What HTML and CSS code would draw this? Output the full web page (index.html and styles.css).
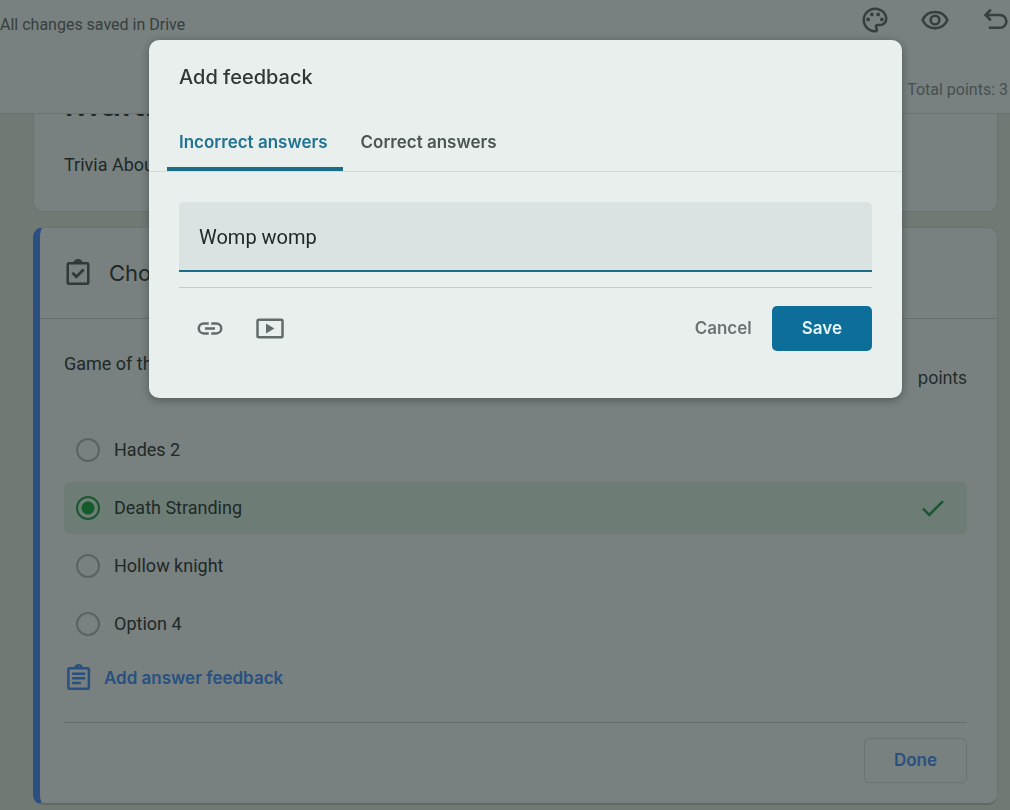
FILE: index.html
```html
<!DOCTYPE html>
<html lang="en">
<head>
  <meta charset="UTF-8">
  <meta name="viewport" content="width=device-width, initial-scale=1.0">
  <title>Add feedback</title>
  <link rel="stylesheet" href="styles.css">
</head>
<body>
  <header class="topbar">
    <div class="topbar-row">
      <p class="save-status">All changes saved in Drive</p>
      <div class="tools">
        <button type="button" class="icon-btn" aria-label="Customize theme">
          <svg width="30" height="30" viewBox="0 0 24 24" fill="currentColor"><path d="M12 22C6.490 22 2 17.510 2 12S6.490 2 12 2s10 4.040 10 9c0 3.310-2.690 6-6 6h-1.770c-.28 0-.5.22-.5.5 0 .12.05.23.13.33.41.47.64 1.060.64 1.670A2.500 2.500 0 0 1 12 22zm0-18c-4.410 0-8 3.590-8 8s3.590 8 8 8c.28 0 .5-.22.5-.5a.54.54 0 0 0-.14-.35c-.41-.46-.63-1.050-.63-1.650a2.500 2.500 0 0 1 2.500-2.500H16c2.210 0 4-1.790 4-4 0-3.860-3.590-7-8-7z"/><circle cx="6.500" cy="11.500" r="1.500"/><circle cx="9.500" cy="7.500" r="1.500"/><circle cx="14.500" cy="7.500" r="1.500"/><circle cx="17.500" cy="11.500" r="1.500"/></svg>
        </button>
        <button type="button" class="icon-btn" aria-label="Preview">
          <svg width="30" height="30" viewBox="0 0 24 24" fill="none" stroke="currentColor" stroke-width="2"><path d="M2.100 12C3.700 8.200 7.500 5.500 12 5.500s8.300 2.700 9.900 6.500c-1.600 3.800-5.400 6.500-9.900 6.500S3.700 15.800 2.100 12z"/><circle cx="12" cy="12" r="3.500"/></svg>
        </button>
        <button type="button" class="icon-btn" aria-label="Undo">
          <svg width="30" height="30" viewBox="0 0 24 24" fill="none" stroke="currentColor" stroke-width="2"><path d="M8.700 3.700L4.400 8l4.300 4.300M4.700 8h11.300a5 5 0 0 1 0 10.200H7"/></svg>
        </button>
      </div>
    </div>
    <p class="total-points">Total points: 3</p>
  </header>

  <main class="form">
    <section class="card intro">
      <h1>Multi</h1>
      <p>Trivia About</p>
    </section>

    <section class="card question">
      <div class="question-head">
        <svg width="30" height="30" viewBox="0 0 24 24" fill="none" stroke="currentColor" stroke-width="2"><rect x="3.800" y="4.200" width="16.400" height="16.300" rx="1"/><path d="M9.500 4a2.500 2.200 0 0 1 5 0M7.500 11.800l3.200 3.200 5.800-5.800" stroke-width="2.200"/></svg>
        <h2>Choose</h2>
      </div>
      <div class="question-body">
        <div class="prompt">
          <p>Game of the year</p>
          <p class="points">points</p>
        </div>
        <div class="options">
          <label class="option"><input type="radio" name="answer">Hades 2</label>
          <label class="option correct">
            <input type="radio" name="answer" checked>Death Stranding
            <svg class="tick" width="30" height="30" viewBox="0 0 24 24" fill="none" stroke="currentColor" stroke-width="2"><path d="M4 12.500l5 5L20 6.500"/></svg>
          </label>
          <label class="option"><input type="radio" name="answer">Hollow knight</label>
          <label class="option"><input type="radio" name="answer">Option 4</label>
        </div>
        <button type="button" class="feedback-btn">
          <svg width="30" height="30" viewBox="0 0 24 24" fill="none" stroke="currentColor" stroke-width="2"><rect x="3.500" y="4.200" width="16.400" height="16.300" rx="1"/><path d="M9.200 4a2.500 2.200 0 0 1 5 0M6.500 8.500h10.500M6.500 12.200h10.500M6.500 16h7"/></svg>
          Add answer feedback
        </button>
        <div class="question-foot">
          <button type="button" class="btn done">Done</button>
        </div>
      </div>
    </section>
  </main>

  <div class="overlay">
    <div class="modal" role="dialog" aria-modal="true" aria-labelledby="modalTitle">
      <h2 id="modalTitle">Add feedback</h2>
      <div class="tabs" role="tablist">
        <button type="button" class="tab active" role="tab" aria-selected="true">Incorrect answers</button>
        <button type="button" class="tab" role="tab" aria-selected="false">Correct answers</button>
      </div>
      <form class="feedback-form">
        <input type="text" class="feedback-input" aria-label="Feedback" value="Womp womp">
        <div class="actions">
          <button type="button" class="icon-btn" aria-label="Add link">
            <svg width="30" height="30" viewBox="0 0 24 24" fill="none" stroke="currentColor" stroke-width="2"><path d="M11 7.500H7a4 4 0 0 0 0 8h4M13 7.500h4a4 4 0 0 1 0 8h-4M8 11.500h8"/></svg>
          </button>
          <button type="button" class="icon-btn" aria-label="Add video">
            <svg width="30" height="30" viewBox="0 0 24 24" fill="none" stroke="currentColor" stroke-width="2"><rect x="2" y="4.500" width="20" height="14" rx="1"/><path d="M8.800 7.500v8l6.700-4z" fill="currentColor" stroke="none"/></svg>
          </button>
          <button type="button" class="btn cancel">Cancel</button>
          <button type="submit" class="btn save">Save</button>
        </div>
      </form>
    </div>
  </div>
</body>
</html>
```
FILE: styles.css
```css
* {
  margin: 0;
  padding: 0;
  box-sizing: border-box;
}

body {
  background-color: #717975;
  color: #202927;
  font-family: Roboto, sans-serif;
  font-size: 18px;
  line-height: 24px;
}

button,
input {
  font: inherit;
  color: inherit;
}

button {
  background: none;
  border: none;
  cursor: pointer;
}

svg {
  display: block;
  flex-shrink: 0;
}

.icon-btn {
  color: #353f3e;
}

/* Top bar */
.topbar {
  position: sticky;
  top: 0;
  z-index: 1;
  height: 114px;
  padding-top: 5px;
  background-color: #788080;
  border-bottom: 1px solid #6b7371;
  font-size: 16px;
}

.topbar-row {
  display: flex;
  justify-content: space-between;
  height: 73px;
}

.save-status {
  padding-top: 8px;
  color: #363f3e;
}

.tools {
  display: flex;
  align-items: flex-start;
  gap: 30px;
}

.total-points {
  padding-right: 2px;
  text-align: right;
  color: #465050;
}

/* Form cards */
.form {
  display: flex;
  flex-direction: column;
  gap: 15px;
  margin-top: -37px;
  padding: 0 12px 6px 33px;
}

.card {
  background-color: #788080;
  border: 1px solid #6b7371;
  border-radius: 10px;
}

.intro {
  padding: 0 30px 34px;
}

.intro h1 {
  margin-bottom: 27px;
  font-family: Inter, sans-serif;
  font-size: 38px;
  font-weight: 500;
  line-height: 48px;
}

.question {
  border-left: 7px solid #2c4f82;
  border-bottom: 2px solid #606866;
}

.question-head {
  display: flex;
  align-items: center;
  gap: 16px;
  height: 91px;
  padding: 0 23px;
  border-bottom: 1px solid #686f6e;
  color: #2f3938;
}

.question-head h2 {
  font-family: Inter, sans-serif;
  font-size: 22px;
  font-weight: 400;
  color: #202927;
}

.question-body {
  padding: 33px 30px 20px 24px;
}

.prompt {
  display: flex;
  justify-content: space-between;
  height: 72px;
}

.points {
  padding-top: 14px;
  font-family: Inter, sans-serif;
  font-size: 17px;
}

.options {
  display: flex;
  flex-direction: column;
  gap: 6px;
}

.option {
  display: flex;
  align-items: center;
  gap: 14px;
  height: 52px;
  padding: 0 19px 0 12px;
  border-radius: 5px;
}

.option input {
  appearance: none;
  width: 24px;
  height: 24px;
  border: 2px solid #5b6362;
  border-radius: 50%;
}

.option.correct {
  background-color: #6d7d76;
}

.option input:checked {
  border-color: #1b5631;
  background: radial-gradient(circle, #145b2a 6px, transparent 7px);
}

.tick {
  margin-left: auto;
  color: #1b5631;
}

.feedback-btn {
  display: flex;
  align-items: center;
  gap: 10px;
  height: 56px;
  padding-right: 8px;
  color: #28517f;
  font-family: Inter, sans-serif;
  font-size: 17px;
  font-weight: 600;
}

.question-foot {
  display: flex;
  justify-content: flex-end;
  margin-top: 16px;
  padding-top: 15px;
  border-top: 1px solid #676f6d;
}

.btn {
  height: 45px;
  padding: 0 29px 2px;
  border-radius: 5px;
  font-family: Inter, sans-serif;
  font-size: 17px;
  font-weight: 600;
}

.done {
  border: 1px solid #6b7371;
  color: #28517f;
}

/* Feedback dialog */
.overlay {
  position: fixed;
  inset: 0;
  z-index: 2;
  display: flex;
  align-items: flex-start;
  padding: 40px 108px 0 149px;
}

.modal {
  flex: 1;
  padding-bottom: 47px;
  background-color: #e9efed;
  border-radius: 10px;
  box-shadow: 0 2px 8px rgba(20, 30, 28, 0.4);
}

.modal h2 {
  padding: 25px 30px 0;
  font-family: Inter, sans-serif;
  font-size: 20px;
  font-weight: 500;
  color: #303735;
}

.tabs {
  display: flex;
  gap: 6px;
  margin-top: 23px;
  padding: 0 18px;
  border-bottom: 1px solid #d3dbd9;
}

.tab {
  height: 59px;
  padding: 4px 15px 0 12px;
  border-bottom: 4px solid transparent;
  border-radius: 3px 3px 0 0;
  font-family: Inter, sans-serif;
  font-size: 17px;
  font-weight: 600;
  color: #4b5553;
}

.tab.active {
  border-bottom-color: #1a6c87;
  color: #227291;
}

.feedback-form {
  padding: 30px 30px 0;
}

.feedback-input {
  display: block;
  width: 100%;
  height: 70px;
  padding: 2px 20px 0;
  background-color: #dbe3e2;
  border: none;
  border-bottom: 2px solid #1a6c87;
  border-radius: 5px 5px 0 0;
  outline: none;
  font-size: 20px;
}

.actions {
  display: flex;
  align-items: center;
  gap: 30px;
  margin-top: 15px;
  padding: 18px 0 0 16px;
  border-top: 1px solid #c1cdca;
}

.actions .icon-btn {
  color: #616c6b;
}

.cancel {
  margin-left: auto;
  padding: 0 0 2px;
  color: #6a7473;
}

.save {
  margin-left: -10px;
  padding: 0 30px 2px;
  background-color: #0d6e99;
  color: #e4f5fa;
}
```
